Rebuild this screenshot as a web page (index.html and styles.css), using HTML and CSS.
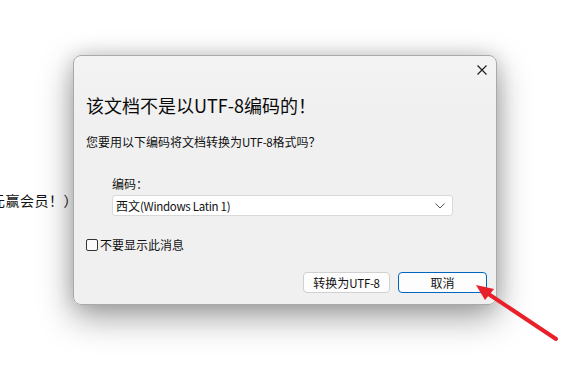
FILE: index.html
```html
<!DOCTYPE html>
<html lang="zh-CN">
<head>
<meta charset="utf-8">
<title>UTF-8</title>
<link rel="stylesheet" href="styles.css">
</head>
<body>
<div class="page">
  <p class="bg-text">充值元赢会员！）</p>
</div>

<div class="dialog">
  <div class="header">
    <svg class="close" width="10" height="10" viewBox="0 0 10 10"><path d="M0.5 0.5 L9.5 9.5 M9.5 0.5 L0.5 9.5" stroke="#1a1a1a" stroke-width="1.1" fill="none"/></svg>
  </div>
  <h1 class="title">该文档不是以UTF-8编码的！</h1>
  <p class="subtitle">您要用以下编码将文档转换为<span class="latin">UTF-8</span>格式吗？</p>
  <div class="encoding">
    <div class="label">编码：</div>
    <div class="select">
      <span class="select-text">西文<span class="latin">(Windows Latin 1)</span></span>
      <svg class="chevron" width="10" height="6" viewBox="0 0 10 6"><path d="M0.5 0.5 L5 5 L9.5 0.5" stroke="#555" stroke-width="1" fill="none"/></svg>
    </div>
  </div>
  <label class="check-row"><span class="checkbox"></span><span class="check-label">不要显示此消息</span></label>
  <div class="buttons">
    <button class="btn">转换为<span class="latin">UTF-8</span></button>
    <button class="btn btn-primary">取消</button>
  </div>
</div>

<svg class="arrow" width="586" height="378" viewBox="0 0 586 378">
  <line x1="556" y1="339" x2="484" y2="291" stroke="#e8202a" stroke-width="4" stroke-linecap="round"/>
  <polygon points="476,285 494,289 485,300" fill="#e8202a"/>
</svg>
</body>
</html>
```

FILE: styles.css
```css
* { box-sizing: border-box; }
html, body { margin: 0; padding: 0; background: #fff; }
body {
  width: 586px;
  height: 378px;
  overflow: hidden;
  position: relative;
  font-family: "Noto Sans CJK SC", "Noto Sans", sans-serif;
  color: #111;
}
.page { padding-top: 191px; }
.bg-text {
  margin: 0 0 0 -38px;
  font-size: 14px;
  line-height: 18px;
  letter-spacing: 0.5px;
  white-space: nowrap;
  color: #111;
}
.dialog {
  position: absolute;
  left: 73px;
  top: 55px;
  width: 424px;
  height: 250px;
  border: 1px solid #a9a9a9;
  border-radius: 8px;
  background: linear-gradient(#f3f3f3, #f0f0f0 60px);
  box-shadow: 0 12px 34px rgba(0,0,0,0.38), 0 0 18px rgba(0,0,0,0.14);
  display: flex;
  flex-direction: column;
  padding: 0 9px 11px 12px;
}
.header {
  height: 28px;
  display: flex;
  justify-content: flex-end;
  align-items: center;
}
.close { display: block; }
.title {
  margin: 9px 0 0;
  font-size: 18px;
  line-height: 24px;
  font-weight: 400;
  color: #0a0a0a;
}
.subtitle {
  margin: 17px 0 0;
  font-size: 12px;
  line-height: 16px;
}
.latin { font-size: 11.5px; letter-spacing: -0.3px; }
.encoding {
  margin: 26px 34px 0 26px;
}
.label { font-size: 12px; line-height: 16px; }
.select {
  margin-top: 3px;
  height: 21px;
  background: #fff;
  border: 1px solid #d9d9d9;
  border-radius: 3px;
  display: flex;
  align-items: center;
  justify-content: space-between;
  padding: 0 6px 0 3px;
}
.select-text { font-size: 12px; line-height: 16px; color: #111; }
.chevron { display: block; margin-right: 1px; }
.check-row {
  margin-top: 23px;
  display: flex;
  align-items: center;
  gap: 2px;
  height: 12px;
}
.checkbox {
  width: 12px;
  height: 12px;
  border: 1px solid #333;
  border-radius: 2px;
  background: #fafafa;
}
.check-label { font-size: 12px; line-height: 14px; }
.buttons {
  margin-top: auto;
  display: flex;
  justify-content: flex-end;
  gap: 8px;
}
.btn {
  height: 21px;
  width: 87px;
  padding: 0;
  font-family: inherit;
  font-size: 12px;
  line-height: 16px;
  color: #111;
  background: #fdfdfd;
  border: 1px solid #d0d0d0;
  border-radius: 4px;
}
.btn-primary {
  width: 89px;
  border-color: #0067c0;
}
.arrow { position: absolute; left: 0; top: 0; pointer-events: none; }
```
